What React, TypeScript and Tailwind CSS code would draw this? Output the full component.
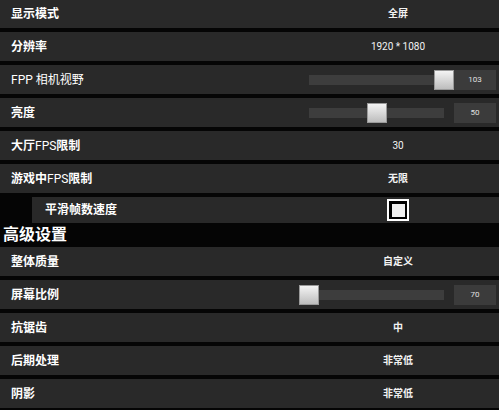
import React from "react"

const font = { fontFamily: "Roboto, 'Noto Sans CJK SC', sans-serif" }

type RowProps = {
  label: React.ReactNode
  children?: React.ReactNode
  first?: boolean
  light?: boolean
}

function Row({ label, children, first, light }: RowProps) {
  return (
    <div className={`flex h-[29px] shrink-0 items-center bg-[#292929] ${first ? "-mt-[1px]" : ""}`}>
      <div className={`w-[297px] pl-[11px] text-[12px] text-white ${light ? "font-normal" : "font-bold"}`}>{label}</div>
      <div className="flex h-full w-[202px] items-center">{children}</div>
    </div>
  )
}

function Value({ text, bold = true }: { text: string; bold?: boolean }) {
  return (
    <div className={`w-full text-center text-[10px] text-[#f2f2f2] ${bold ? "font-bold" : "font-normal"}`}>{text}</div>
  )
}

function Slider({ pct, value }: { pct: number; value: string }) {
  return (
    <div className="flex w-full items-center pl-[2px]">
      <div className="relative h-[20px] w-[155px]">
        <div className="absolute left-[10px] right-[10px] top-[5px] h-[10px] bg-[#3d3d3d]" />
        <div
          className="absolute top-0 h-[20px] w-[20px] border border-[#9a9a9a] bg-gradient-to-b from-[#f4f4f4] to-[#bdbdbd]"
          style={{ left: `${pct * 135}px` }}
        />
      </div>
      <div className="flex h-[20px] w-[42px] items-center justify-center bg-[#3b3b3b] text-[8px] text-[#e0e0e0]">
        {value}
      </div>
    </div>
  )
}

export default function App() {
  return (
    <div className="h-[410px] w-[499px] overflow-hidden bg-[#050505]" style={font}>
      <div className="flex flex-col gap-[4px]">
        <Row label="显示模式" first>
          <Value text="全屏" />
        </Row>
        <Row label="分辨率">
          <Value text="1920 * 1080" bold={false} />
        </Row>
        <Row label="FPP 相机视野" light>
          <Slider pct={1} value="103" />
        </Row>
        <Row label="亮度">
          <Slider pct={0.5} value="50" />
        </Row>
        <Row label={<>大厅<span className="font-normal">FPS</span>限制</>}>
          <Value text="30" bold={false} />
        </Row>
        <Row label={<>游戏中<span className="font-normal">FPS</span>限制</>}>
          <Value text="无限" />
        </Row>
        <div className="ml-[32px] flex h-[26px] items-center bg-[#292929]">
          <div className="w-[265px] pl-[13px] text-[12px] font-bold text-white">平滑帧数速度</div>
          <div className="flex w-[202px] justify-center">
            <div className="flex h-[22px] w-[22px] items-center justify-center border-2 border-white bg-black">
              <div className="h-[13px] w-[13px] bg-[#efefef]" />
            </div>
          </div>
        </div>
      </div>
      <div className="flex h-[24px] items-center pl-[3px] text-[16px] font-bold text-white">高级设置</div>
      <div className="flex flex-col gap-[4px]">
        <Row label="整体质量">
          <Value text="自定义" />
        </Row>
        <Row label="屏幕比例">
          <Slider pct={0} value="70" />
        </Row>
        <Row label="抗锯齿">
          <Value text="中" />
        </Row>
        <Row label="后期处理">
          <Value text="非常低" />
        </Row>
        <Row label="阴影">
          <Value text="非常低" />
        </Row>
      </div>
    </div>
  )
}
